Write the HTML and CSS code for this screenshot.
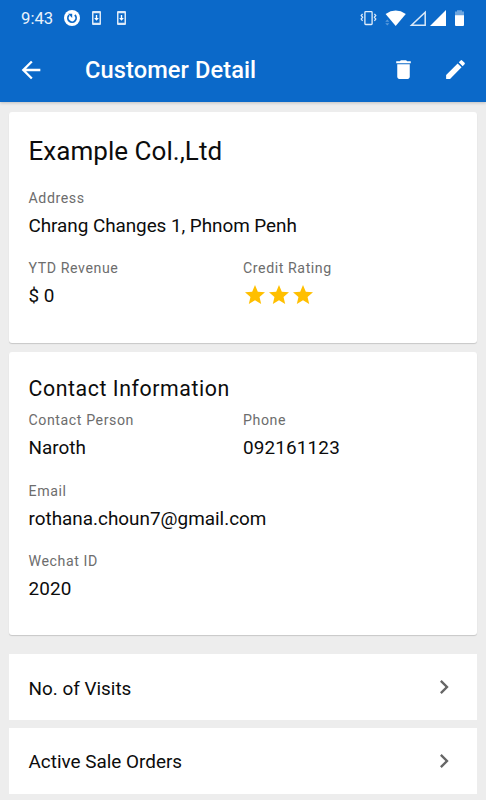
FILE: index.html
```html
<!DOCTYPE html>
<html lang="en">
	<head>
		<meta charset="utf-8">
		<title>Customer Detail</title>
		<link rel="stylesheet" href="styles.css">
	</head>
	<body>
		<header class="header">
			<div class="status">
				<span class="clock">9:43</span>
				<svg class="s-sync" width="16" height="16" viewBox="0 0 16 16">
					<circle cx="8" cy="8" r="8" fill="#fff"/>
					<path d="M5 5.2A4.1 4.1 0 1 0 10.8 5" fill="none" stroke="#0b69c9" stroke-width="1.8"/>
					<path d="M4.2 3.7h4v4.2z" fill="#0b69c9"/>
				</svg>
				<svg class="s-app" width="9" height="14" viewBox="0 0 9 14">
					<path d="M1 0h7q1 0 1 1v12q0 1-1 1H1q-1 0-1-1V1q0-1 1-1zM1.5 2.3v9.4h6V2.3z" fill="#dbe9f8" fill-rule="evenodd"/>
					<path d="M3.8 4h1.4v3h1.7L4.5 9.7 2.1 7h1.7z" fill="#fff"/>
				</svg>
				<svg class="s-app" width="9" height="14" viewBox="0 0 9 14">
					<path d="M1 0h7q1 0 1 1v12q0 1-1 1H1q-1 0-1-1V1q0-1 1-1zM1.5 2.3v9.4h6V2.3z" fill="#dbe9f8" fill-rule="evenodd"/>
					<path d="M3.8 4h1.4v3h1.7L4.5 9.7 2.1 7h1.7z" fill="#fff"/>
				</svg>

				<svg class="s-right" width="106" height="18" viewBox="0 0 106 18">
					<!-- vibrate -->
					<rect x="4.9" y="2.7" width="7.2" height="12.8" rx=".8" fill="none" stroke="#e4effa" stroke-width="1.3"/>
					<path d="M2.6 4.8L1.2 6.5l1.4 1.8-1.4 1.8 1.4 1.8M14.4 4.8l1.4 1.7-1.4 1.8 1.4 1.8-1.4 1.8" fill="none" stroke="#dbe9f8" stroke-width="1.3"/>
					<!-- wifi -->
					<path d="M25.6 5Q35.7-1.8 45.8 5L35.7 17z" fill="#fff"/>
					<path d="M25.3 12.8l2-2.4 2 2.4zM25.3 14.2h4l-2 2.3z" fill="#5b9bdd"/>
					<!-- signal -->
					<path d="M51.5 16.3H65.2V3.2z" fill="none" stroke="#dbe9f8" stroke-width="1.5"/>
					<path d="M70 17H86V1z" fill="#fff"/>
					<!-- battery -->
					<path d="M97 1.2h5v1.3h2V7h-9V2.5h2z" fill="#6ca5df"/>
					<path d="M95 6.2h9V16q0 1-1 1h-7q-1 0-1-1z" fill="#fff"/>
				</svg>
			</div>

			<div class="toolbar">
				<svg class="back" width="28" height="28" viewBox="0 0 24 24">
					<path d="M20 11H7.83l5.59-5.59L12 4l-8 8 8 8 1.41-1.41L7.83 13H20z"/>
				</svg>
				<h1 class="title">Customer Detail</h1>
				<svg class="delete" width="25" height="25" viewBox="0 0 24 24">
					<path d="M6 19c0 1.1.9 2 2 2h8c1.1 0 2-.9 2-2V7H6zM19 4h-3.5l-1-1h-5l-1 1H5v2h14z"/>
				</svg>
				<svg class="edit" width="25" height="25" viewBox="0 0 24 24">
					<path d="M3 17.25V21h3.75L17.81 9.94l-3.75-3.75zM20.71 7.04a1 1 0 0 0 0-1.41l-2.34-2.34a1 1 0 0 0-1.41 0l-1.83 1.83 3.75 3.75z"/>
				</svg>
			</div>
		</header>

		<main class="content">
			<section class="card">
				<h2 class="name">Example Col.,Ltd</h2>
				<div class="field">
					<div class="label">Address</div>
					<div class="value address">Chrang Changes 1, Phnom Penh</div>
				</div>
				<div class="columns">
					<div class="field">
						<div class="label">YTD Revenue</div>
						<div class="value">$ 0</div>
					</div>
					<div class="field">
						<div class="label">Credit Rating</div>
						<div class="stars">
							<svg width="24" height="24" viewBox="0 0 24 24"><path d="M12 17.27L18.18 21l-1.64-7.03L22 9.24l-7.19-.61L12 2 9.19 8.63 2 9.24l5.46 4.73L5.82 21z"/></svg>
							<svg width="24" height="24" viewBox="0 0 24 24"><path d="M12 17.27L18.18 21l-1.64-7.03L22 9.24l-7.19-.61L12 2 9.19 8.63 2 9.24l5.46 4.73L5.82 21z"/></svg>
							<svg width="24" height="24" viewBox="0 0 24 24"><path d="M12 17.27L18.18 21l-1.64-7.03L22 9.24l-7.19-.61L12 2 9.19 8.63 2 9.24l5.46 4.73L5.82 21z"/></svg>
						</div>
					</div>
				</div>
			</section>

			<section class="card contact">
				<h2 class="heading">Contact Information</h2>
				<div class="columns">
					<div class="field">
						<div class="label">Contact Person</div>
						<div class="value">Naroth</div>
					</div>
					<div class="field">
						<div class="label">Phone</div>
						<div class="value number">092161123</div>
					</div>
				</div>
				<div class="field">
					<div class="label">Email</div>
					<div class="value">rothana.choun7@gmail.com</div>
				</div>
				<div class="field">
					<div class="label">Wechat ID</div>
					<div class="value number">2020</div>
				</div>
			</section>

			<nav class="links">
				<div class="link">
					<span>No. of Visits</span>
					<svg width="28" height="28" viewBox="0 0 24 24"><path d="M10 6L8.59 7.41 13.17 12l-4.58 4.59L10 18l6-6z"/></svg>
				</div>
				<div class="link">
					<span>Active Sale Orders</span>
					<svg width="28" height="28" viewBox="0 0 24 24"><path d="M10 6L8.59 7.41 13.17 12l-4.58 4.59L10 18l6-6z"/></svg>
				</div>
			</nav>
		</main>
	</body>
</html>
```

FILE: styles.css
```css
html,body {
	margin: 0;
	padding: 0;
	height: 100%;
	overflow: hidden;
}

body {
	background: #ededed;
	color: #0c0c0c;
	font-family: Roboto, "Liberation Sans", sans-serif;
}

h1,h2 {
	margin: 0;
	font-weight: 400;
}

svg {
	display: block;
	flex: none;
}

/* Header */
.header {
	height: 102px;
	background: #0b69c9;
	color: #fff;
	box-shadow: 0 1px 3px rgba(0,0,0,0.2);
}

.status {
	display: flex;
	align-items: center;
	height: 36px;
	padding: 0 20px 0 21px;
}
.clock {
	width: 42.5px;
	font-size: 16.7px;
	color: #e9f2fb;
}
.s-app { margin-left: 12.5px; }
.s-app + .s-app { margin-left: 16px; }
.s-right { margin-left: auto; }

.toolbar {
	display: flex;
	align-items: center;
	height: 67px;
	padding: 0 18px 0 17px;
}
.toolbar svg { fill: #fff; }
.title {
	flex: 1;
	margin-left: 40px;
	font-size: 23.6px;
	font-weight: 500;
	letter-spacing: 0.1px;
}
.edit { margin-left: 27px; }

/* Cards */
.content { padding: 9.5px 9.5px 0 9px; }

.card {
	box-sizing: border-box;
	height: 231.5px;
	margin-bottom: 9px;
	padding: 23.5px 19.5px 0;
	background: #fff;
	border-radius: 3px;
	box-shadow: 0 1px 1px rgba(0,0,0,0.16);
}
.contact {
	height: 283px;
	padding-top: 23px;
}

.name {
	margin-bottom: 21px;
	font-size: 26px;
	line-height: 32px;
	letter-spacing: 0.04px;
}
.heading {
	margin-bottom: 7px;
	font-size: 21.3px;
	line-height: 28px;
	letter-spacing: 0.58px;
}

.columns {
	display: grid;
	grid-template-columns: 214.5px 1fr;
}
.field { margin-bottom: 18px; }
.contact .field { margin-bottom: 18.5px; }
.label {
	margin-bottom: 4px;
	font-size: 14.2px;
	line-height: 20px;
	letter-spacing: 0.57px;
	color: #6d6d6d;
}
.value {
	font-size: 18.9px;
	line-height: 28px;
}
.address { letter-spacing: -0.05px; }
.number { letter-spacing: 0.15px; }
.stars {
	display: flex;
	padding-top: 1px;
	fill: #ffbf00;
}

/* Links */
.links { padding-top: 10px; }
.link {
	display: flex;
	align-items: center;
	justify-content: space-between;
	height: 66px;
	margin-bottom: 7.5px;
	padding: 0 19px 0 19.5px;
	background: #fff;
	font-size: 18.9px;
}
.link span { padding-top: 2px; }
.link svg { fill: #666; }
```
